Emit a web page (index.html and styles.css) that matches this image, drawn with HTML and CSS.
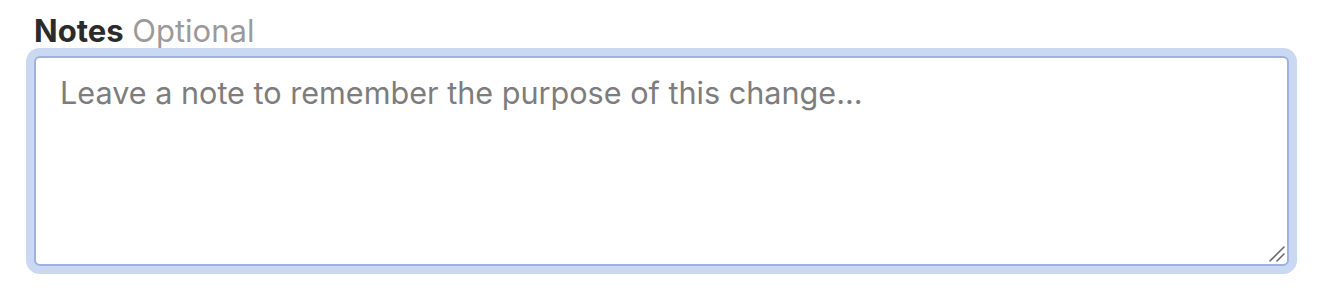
FILE: index.html
```html
<!DOCTYPE html>
<html>
<head>
<meta charset="utf-8">
<link rel="stylesheet" href="styles.css">
</head>
<body>
<div class="field">
  <label class="label" for="notes"><span class="label-main">Notes</span> <span class="label-opt">Optional</span></label>
  <div class="notes-wrap">
    <textarea id="notes" class="notes" placeholder="Leave a note to remember the purpose of this change..."></textarea>
    <svg class="grip" width="18" height="18" viewBox="0 0 18 18" aria-hidden="true">
      <line x1="2" y1="16" x2="16" y2="2" stroke="#6a6a6a" stroke-width="1.6" stroke-linecap="round"/>
      <line x1="9" y1="16" x2="16" y2="9" stroke="#6a6a6a" stroke-width="1.6" stroke-linecap="round"/>
    </svg>
  </div>
</div>
</body>
</html>
```
FILE: styles.css
```css
html, body {
  margin: 0;
  padding: 0;
  background: #ffffff;
}
body {
  font-family: Inter, "Liberation Sans", Arial, sans-serif;
}
.field {
  box-sizing: border-box;
  height: 300px;
  padding: 14px 31px 34px 34px;
  display: flex;
  flex-direction: column;
}
.label {
  font-size: 31px;
  line-height: 34px;
  margin-bottom: 8px;
}
.label-main {
  font-weight: 700;
  color: #2b2b2b;
}
.label-opt {
  color: #9a9a9a;
}
.notes-wrap {
  position: relative;
  height: 210px;
}
.notes {
  display: block;
  box-sizing: border-box;
  height: 210px;
  width: 100%;
  margin: 0;
  border: 2px solid #9cb2e4;
  border-radius: 6px;
  box-shadow: 0 0 0 8px #cad8f1;
  outline: none;
  padding: 16px 24px;
  font-family: Inter, "Liberation Sans", Arial, sans-serif;
  font-size: 30.6px;
  line-height: 38px;
  color: #2b2b2b;
  resize: vertical;
}
.notes::-webkit-resizer {
  background: transparent;
}
.notes::placeholder {
  color: #7d7d7d;
}
.grip {
  position: absolute;
  right: 3px;
  bottom: 3px;
  pointer-events: none;
}
```
